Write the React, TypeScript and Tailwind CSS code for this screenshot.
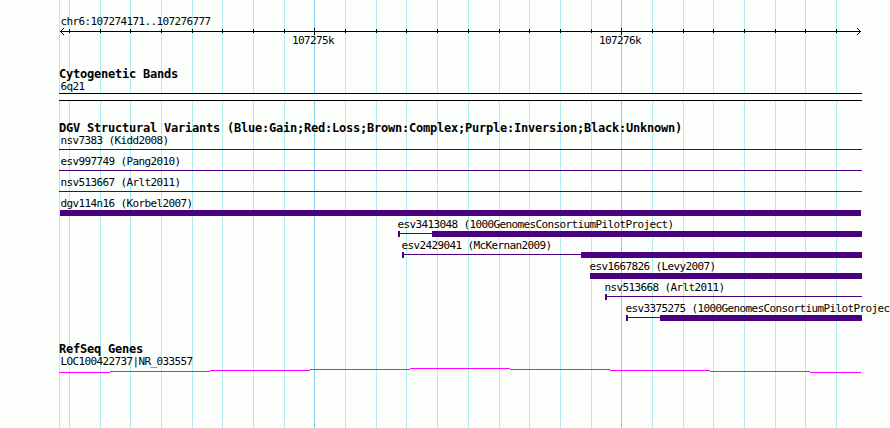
// src/App.tsx
const minorLines = [
  59, 69, 100, 130, 161, 192, 222, 253, 284, 345, 376, 406, 437, 468, 499, 529,
  560, 591, 652, 683, 713, 744, 775, 805, 836,
];
const majorLines = [314, 621];

type Variant = {
  label: string;
  labelX: number;
  start: number;
  // first pixel of the thick part, if there is one
  bar?: number;
  end?: number;
  cap?: boolean;
};

const variants: Variant[] = [
  { label: "nsv7383 (Kidd2008)", labelX: 60.5, start: 59 },
  { label: "esv997749 (Pang2010)", labelX: 60.5, start: 59 },
  { label: "nsv513667 (Arlt2011)", labelX: 60.5, start: 59 },
  { label: "dgv114n16 (Korbel2007)", labelX: 60.5, start: 60, bar: 60, end: 861 },
  { label: "esv3413048 (1000GenomesConsortiumPilotProject)", labelX: 397.5, start: 398, bar: 432, cap: true },
  { label: "esv2429041 (McKernan2009)", labelX: 401.5, start: 402, bar: 581, cap: true },
  { label: "esv1667826 (Levy2007)", labelX: 589.5, start: 590, bar: 590 },
  { label: "nsv513668 (Arlt2011)", labelX: 604.5, start: 605, cap: true },
  { label: "esv3375275 (1000GenomesConsortiumPilotProject)", labelX: 625.5, start: 626, bar: 660, cap: true },
];

function Gridlines() {
  return (
    <svg className="absolute inset-0" width="890" height="428" shapeRendering="crispEdges">
      {minorLines.map((x) => (
        <rect key={x} x={x} y="0" width="1" height="428" fill="#afeeee" />
      ))}
      {majorLines.map((x) => (
        <rect key={x} x={x} y="0" width="1" height="428" fill="#87ceeb" />
      ))}
    </svg>
  );
}

function Ruler() {
  return (
    <svg className="block" width="890" height="8" shapeRendering="crispEdges">
      <rect x="60" y="3" width="801" height="1" fill="#000" />
      {minorLines.slice(1).map((x) => (
        <rect key={x} x={x} y="1" width="1" height="4" fill="#000" />
      ))}
      {majorLines.map((x) => (
        <rect key={x} x={x} y="0" width="1" height="7" fill="#000" />
      ))}
      <path
        d="M61 2h1v1h-1zM62 1h1v1h-1zM63 0h1v1h-1zM61 4h1v1h-1zM62 5h1v1h-1zM63 6h1v1h-1zM859 2h1v1h-1zM858 1h1v1h-1zM857 0h1v1h-1zM859 4h1v1h-1zM858 5h1v1h-1zM857 6h1v1h-1z"
        fill="#000"
      />
    </svg>
  );
}

function Title({ children }: { children: string }) {
  return (
    <h2 className="ml-[59px] h-3 text-[12px] leading-[13px] font-bold tracking-[-0.224px]">{children}</h2>
  );
}

function VariantRow({ label, labelX, start, bar, end = 862, cap }: Variant) {
  return (
    <div className="h-[21px]">
      <div className="h-[13px]" style={{ marginLeft: labelX }}>
        {label}
      </div>
      <div className="flex h-1.5" style={{ marginLeft: start, width: end - start }}>
        {cap && <div className="w-0.5 bg-[#4b0082]" />}
        <div className="mt-0.5 h-px flex-1 bg-[#4b0082]" />
        {bar !== undefined && <div className="bg-[#4b0082]" style={{ width: end - bar }} />}
      </div>
    </div>
  );
}

export default function App() {
  return (
    <div className="relative h-[428px] w-[890px] overflow-hidden bg-[#fdfffc] font-['DejaVu_Sans_Mono',monospace] text-[11px] leading-[14px] tracking-[-0.622px] whitespace-nowrap text-black">
      <Gridlines />

      <main className="relative pt-[15px]">
        {/* Ruler */}
        <div className="ml-[60.5px] h-[13px]">chr6:107274171..107276777</div>
        <Ruler />
        <div className="-mt-0.5 flex h-3">
          <span className="ml-[292px] w-[307px]">107275k</span>
          <span>107276k</span>
        </div>

        {/* Cytogenetic bands */}
        <section className="mt-[22px]">
          <Title>Cytogenetic Bands</Title>
          <div className="ml-[60.5px] h-[13px]">6q21</div>
          <div className="ml-[59px] h-2 w-[803px] border-y border-black bg-[#fdfffc]" />
        </section>

        {/* Structural variants */}
        <section className="mt-[21px]">
          <Title>DGV Structural Variants (Blue:Gain;Red:Loss;Brown:Complex;Purple:Inversion;Black:Unknown)</Title>
          {variants.map((v) => (
            <VariantRow key={v.label} {...v} />
          ))}
        </section>

        {/* Genes */}
        <section className="mt-5">
          <Title>RefSeq Genes</Title>
          <div className="ml-[60.5px] h-[13px]">LOC100422737|NR_033557</div>
          <svg className="block" width="890" height="6" shapeRendering="crispEdges">
            <path
              d="M59 4.5H110M110 3.5H210M210 2.5H310M310 1.5H410M410 .5H510M510 1.5H610M610 2.5H710M710 3.5H810M810 4.5H861"
              stroke="#ff00ff"
              fill="none"
            />
          </svg>
        </section>
      </main>
    </div>
  );
}
